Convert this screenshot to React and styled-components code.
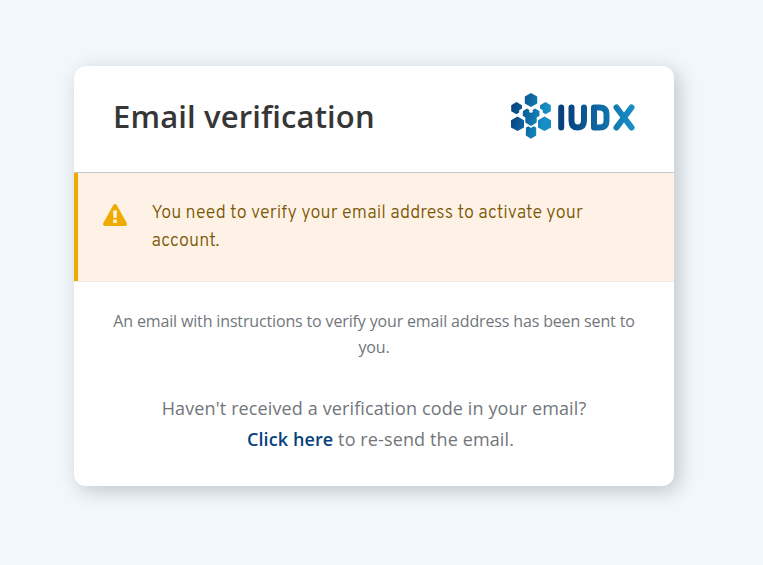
import React from "react";
import styled, { createGlobalStyle } from "styled-components";

const GlobalStyle = createGlobalStyle`
  * { box-sizing: border-box; }
  body { margin: 0; background: #f1f7fb; font-family: "Open Sans", sans-serif; }
`;

const Page = styled.main`
  min-height: 100vh;
  padding: 66px 89px 0 74px;
`;

const Card = styled.section`
  height: 420px;
  background: #fff;
  border-radius: 12px;
  box-shadow: 5px 5px 20px rgba(0, 0, 0, 0.2);
`;

const Header = styled.header`
  display: flex;
  justify-content: space-between;
  align-items: flex-start;
  height: 107px;
  padding: 27px 39px 0 39px;
  border-bottom: 1px solid #c8c8cc;
`;

const Title = styled.h1`
  margin: 2px 0 0;
  font-size: 31px;
  line-height: 43px;
  font-weight: 600;
  letter-spacing: 0.13px;
  color: #363636;
`;

const Logo = styled.svg`
  display: block;
  width: 124px;
  height: 46px;
`;

const Alert = styled.div`
  display: flex;
  height: 109px;
  padding: 27px 60px 0 25px;
  border-bottom: 1px solid #ececec;
  box-shadow: inset 4px 0 #f0ab00;
  padding-left: 29px;
  background: #fef1e6;
`;

const AlertIcon = styled.svg`
  flex: none;
  width: 24px;
  height: 22px;
  margin: 4px 24.4px 0 0;
`;

const AlertText = styled.p`
  margin: 0;
  font-family: "Overpass", "Roboto", sans-serif;
  font-size: 18px;
  font-weight: 300;
  line-height: 28px;
  letter-spacing: 0.08px;
  color: #795600;
`;

const Instruction = styled.p`
  margin: 0;
  padding: 26px 36px 0;
  text-align: center;
  font-size: 16px;
  line-height: 26px;
  letter-spacing: -0.15px;
  color: #72767b;
`;

const Resend = styled.h3`
  margin: 33px 0 0;
  text-align: center;
  font-size: 18px;
  font-weight: 400;
  line-height: 31px;
  letter-spacing: 0.12px;
  color: #72767b;
`;

const Link = styled.a`
  margin-left: 13px;
  font-weight: 600;
  letter-spacing: 0.1px;
  color: #05417e;
`;

const HEXAGONS = [
  "M20 0 26.200 3.500V10.500L20 14 13.800 10.500V3.500Z",
  "M5.500 9 11 12.200V15.500L8.200 17.200V19.500L5.500 21.200 .200 18.200V12.200Z",
  "M34.500 9 39.800 12.200V18.200L34.500 21.200 31.800 19.500V17.200L29 15.500V12.200Z",
  "M6.500 23.500 13 27.200V34.400L6.500 38 0 34.400V27.200Z",
  "M33.500 23.500 40 27.200V34.400L33.500 38 27 34.400V27.200Z",
  "M12 18 16 15.500 18.300 17V19L20 20 21.700 19V17L24 15.500 28.500 18V22.800L25.700 24.500V29.500L20 33 14.300 29.500V24.500L11.700 22.800Z",
  "M15 34.500 17.500 33.200 20 35 22.500 33.200 25.200 34.500V42.500L20 45.700 14.800 42.500Z",
];

function IudxLogo() {
  return (
    <Logo viewBox="0 0 124 46" role="img" aria-label="IUDX">
      <defs>
        <linearGradient id="mark" gradientUnits="userSpaceOnUse" x1="4" y1="0" x2="38" y2="8">
          <stop offset="0" stopColor="#07427f" /><stop offset="1" stopColor="#168fc5" />
        </linearGradient>
        <linearGradient id="word" gradientUnits="userSpaceOnUse" x1="55" y1="0" x2="122" y2="0">
          <stop offset="0" stopColor="#07427f" /><stop offset="1" stopColor="#168fc5" />
        </linearGradient>
      </defs>
      {HEXAGONS.map((d) => <path key={d} d={d} fill="url(#mark)" />)}
      <g fill="none" stroke="url(#word)" strokeWidth="6" strokeLinecap="round" strokeLinejoin="round">
        <path d="M50.200 14.500 50.210 34.500" />
        <path d="M60.500 14.500V27.500Q60.500 34.500 66.700 34.500T73 27.500V14.500" />
        <path d="M83 14.500V34.500H88.500Q95.500 34.500 95.500 28V21Q95.500 14.500 88.500 14.500Z" />
        <path d="M105.500 14.500 120.500 34.500M120.500 14.500 105.500 34.500" />
      </g>
    </Logo>
  );
}

export default function App() {
  return (
    <Page>
      <GlobalStyle />
      <Card>
        <Header><Title>Email verification</Title><IudxLogo /></Header>
        <Alert>
          <AlertIcon viewBox="0 0 24 22">
            <path d="M10.300 1Q12-1 13.700 1L23.700 19Q24.500 22 22 22H2Q-.5 22 .3 19Z" fill="#f0ab00" />
            <path d="M10 6.500H14L13.500 14H10.500ZM10.200 15.500H13.800V19H10.200Z" fill="#fdf0e5" />
          </AlertIcon>
          <AlertText>You need to verify your email address to activate your account.</AlertText>
        </Alert>
        <Instruction>An email with instructions to verify your email address has been sent to you.</Instruction>
        <Resend>Haven't received a verification code in your email?<br /><Link>Click here</Link> to re-send the email.</Resend>
      </Card>
    </Page>
  );
}
